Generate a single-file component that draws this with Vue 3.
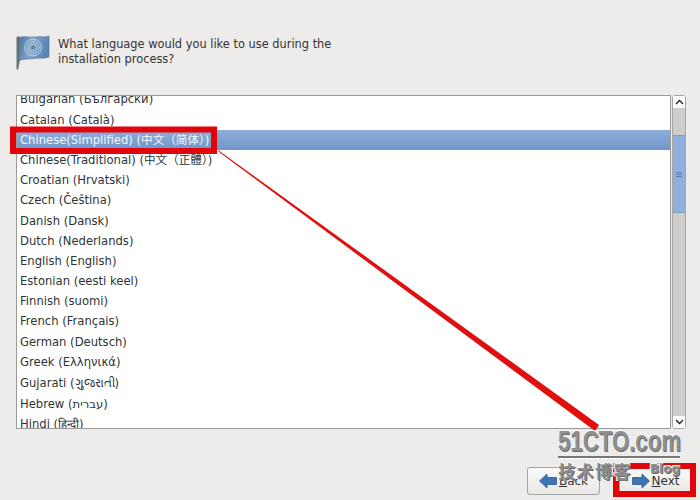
<script setup>
const rows = [
  'Bulgarian (Български)', 'Catalan (Català)', 'Chinese(Simplified) (中文（简体）)', 'Chinese(Traditional) (中文（正體）)',
  'Croatian (Hrvatski)', 'Czech (Čeština)', 'Danish (Dansk)', 'Dutch (Nederlands)', 'English (English)',
  'Estonian (eesti keel)', 'Finnish (suomi)', 'French (Français)', 'German (Deutsch)', 'Greek (Ελληνικά)',
  'Gujarati (ગુજરાતી)', 'Hebrew (עברית)', 'Hindi (हिन्दी)'
]
</script>

<template>
  <div class="page">
    <header class="head">
      <svg class="flag" width="36" height="36" viewBox="0 0 36 36">
        <defs>
          <linearGradient id="fl" x1="0" y1="0" x2="1" y2="0.2">
            <stop offset="0" stop-color="#47729f" />
            <stop offset="0.45" stop-color="#85a7cc" />
            <stop offset="1" stop-color="#5a86b4" />
          </linearGradient>
        </defs>
        <path d="M0.5 2 L3 1 L3.5 28 L2 35 L0.5 34 Z" fill="#6f6f6a" />
        <path d="M3 2.5 C9 0.5 13 3 19 2 C25 1 29 3 33 1 L33 22 C28 24 24 22.5 18 23.5 C12 24.5 8 23 3 26 Z" fill="url(#fl)" stroke="#4a76a3" stroke-width="0.7" />
        <g fill="none" stroke="#c5d7e9">
          <circle cx="17" cy="12.5" r="8.4" stroke-width="0.9" />
          <circle cx="17" cy="12.5" r="6" stroke-width="0.8" />
          <circle cx="17" cy="12.5" r="3.6" stroke-width="0.8" />
        </g>
        <circle cx="17" cy="12.5" r="2" fill="#5f86ae" />
      </svg>
      <p class="title">What language would you like to use during the<br />installation process?</p>
    </header>
    <div class="body">
      <div class="list">
        <div class="rows">
          <div v-for="(r, i) in rows" :key="r" class="row" :class="{ sel: i === 2, tall: i === 13 || i === 14 }">{{ r }}</div>
        </div>
      </div>
      <div class="bar">
        <div class="step"><svg width="9" height="6" viewBox="0 0 9 6"><path d="M1 5 L4.5 1.5 L8 5" fill="none" stroke="#222" stroke-width="1.4" /></svg></div>
        <div class="trough">
          <div class="thumb"><i></i><i></i><i></i></div>
        </div>
        <div class="step"><svg width="9" height="6" viewBox="0 0 9 6"><path d="M1 1 L4.5 4.5 L8 1" fill="none" stroke="#222" stroke-width="1.4" /></svg></div>
      </div>
    </div>
    <footer class="foot">
      <button class="btn">
        <svg width="18" height="16" viewBox="0 0 18 16"><path d="M0.5 8 L8 1 V4.5 H17.5 V11.5 H8 V15 Z" fill="#3f74b4" stroke="#2b5a8c" stroke-width="0.8" /></svg>
        <span><u>B</u>ack</span>
      </button>
      <button class="btn">
        <svg width="18" height="16" viewBox="0 0 18 16"><path d="M17.5 8 L10 1 V4.5 H0.5 V11.5 H10 V15 Z" fill="#3f74b4" stroke="#2b5a8c" stroke-width="0.8" /></svg>
        <span><u>N</u>ext</span>
      </button>
    </footer>

    <svg class="ink" width="700" height="500" viewBox="0 0 700 500">
      <polygon points="218,150 599,425 595,431 219,152" fill="#e0100f" />
      <rect x="13" y="129.5" width="201" height="21.5" fill="none" stroke="#e1040a" stroke-width="6" />
      <rect x="616" y="466" width="77" height="28" fill="none" stroke="#e1040a" stroke-width="6" />
    </svg>
    <div class="mark">
      <div class="mark-big">51CTO.com</div>
      <div class="mark-rule"></div>
      <div class="mark-sub"><span>技术博客</span><span class="blog">Blog</span></div>
    </div>
  </div>
</template>

<style>
body { margin: 0; }
</style>

<style scoped>
.page {
  position: relative;
  width: 700px;
  height: 500px;
  overflow: hidden;
  box-sizing: border-box;
  padding: 35px 8px 0 16px;
  background: #edeceb;
  font-family: "DejaVu Sans", "Noto Sans CJK SC", sans-serif;
  font-size: 11.6px;
  color: #2e3436;
  display: flex;
  flex-direction: column;
}
.head {
  display: flex;
  align-items: flex-start;
  gap: 6px;
  height: 60px;
  flex: none;
}
.flag { flex: none; }
.title {
  margin: 2px 0 0;
  font-size: 11.4px;
  line-height: 15px;
  color: #333;
}
.body {
  display: flex;
  gap: 1px;
  height: 334px;
  flex: none;
}
.list {
  width: 655px;
  box-sizing: border-box;
  border: 1px solid #9a9a98;
  background: #fff;
  overflow: hidden;
}
.rows { margin-top: -6.6px; }
.row {
  height: 20.2px;
  line-height: 20.2px;
  padding-left: 3px;
  white-space: nowrap;
}
.row.tall {
  height: 21.2px;
  line-height: 21.2px;
}
.row.sel {
  background: linear-gradient(#8eaeda, #6f96c9);
  color: #f4f7fb;
}
.bar {
  width: 14px;
  box-sizing: border-box;
  display: flex;
  flex-direction: column;
  border: 1px solid #a5a5a3;
  border-radius: 3px;
  background: #cfcdcb;
}
.step {
  height: 12px;
  flex: none;
  background: #fbfbfa;
  display: flex;
  align-items: center;
  justify-content: center;
}
.trough {
  flex: 1;
  padding-top: 27px;
}
.thumb {
  height: 78px;
  box-sizing: border-box;
  background: #8fb0dc;
  border-top: 1px solid #7e9fcb;
  border-bottom: 1px solid #7e9fcb;
  display: flex;
  flex-direction: column;
  align-items: center;
  justify-content: center;
  gap: 1px;
}
.thumb i {
  width: 6px;
  height: 1px;
  background: #5d7fae;
}
.foot {
  display: flex;
  justify-content: flex-end;
  gap: 19px;
  padding-top: 38px;
}
.btn {
  height: 28px;
  width: 73px;
  box-sizing: border-box;
  border: 1px solid #a3a3a1;
  border-radius: 3px;
  background: linear-gradient(#fbfbfa, #e8e7e5);
  font: inherit;
  font-size: 12px;
  color: #2e3436;
  display: flex;
  align-items: center;
  justify-content: center;
  gap: 2px;
  padding: 0;
}
.ink {
  position: absolute;
  left: 0;
  top: 0;
}
.mark {
  position: absolute;
  left: 558px;
  top: 426px;
  width: 122px;
  color: #8f8f8f;
  text-shadow: 1px 1px 0 #666, -1px -1px 0 #f4f4f4, 1px -1px 0 #f4f4f4, -1px 1px 0 #f4f4f4;
}
.mark-big {
  font-family: "Liberation Sans", sans-serif;
  font-weight: 700;
  font-size: 30px;
  line-height: 30px;
  transform: scaleX(0.74);
  transform-origin: left;
  white-space: nowrap;
}
.mark-rule {
  height: 2px;
  margin-top: 0;
  background: #777;
  border-bottom: 1px solid #fff;
}
.mark-sub {
  display: flex;
  align-items: flex-start;
  justify-content: space-between;
  margin-top: 3px;
  font-weight: 700;
  font-size: 17px;
  line-height: 20px;
  letter-spacing: 1.5px;
}
.blog {
  font-size: 12px;
  line-height: 14px;
  letter-spacing: 0;
}
</style>
